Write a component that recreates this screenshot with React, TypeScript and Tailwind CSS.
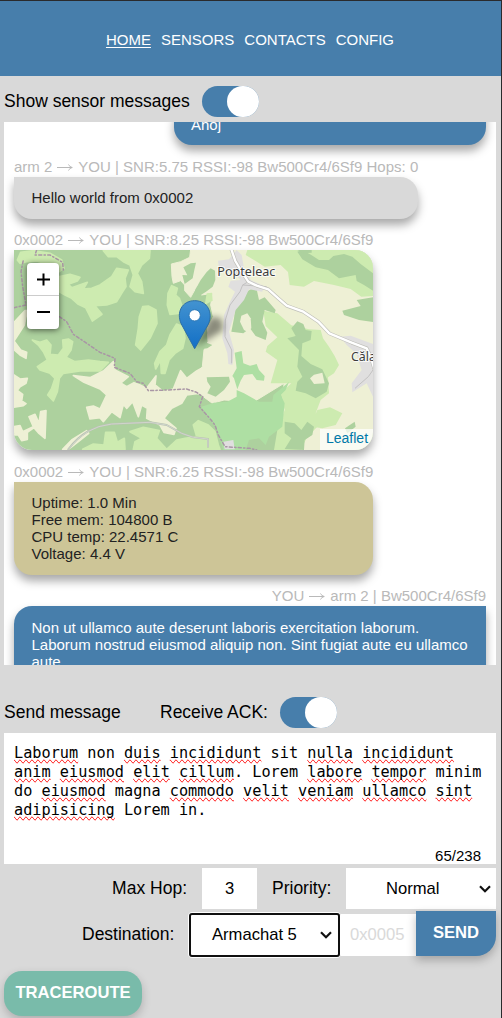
import type { ReactNode } from "react";

function Toggle() {
  return (
    <span className="flex h-[31px] w-[57px] shrink-0 justify-end rounded-full bg-[#477eab]">
      <span className="h-[31px] w-8 rounded-full bg-white" />
    </span>
  );
}

function Label({ children, right }: { children: ReactNode; right?: boolean }) {
  return (
    <div
      className={
        "flex h-[31px] items-end whitespace-nowrap pb-[2px] text-[15px] leading-[17px] text-[#b9b9b9] " +
        (right ? "justify-end" : "")
      }
    >
      {children}
    </div>
  );
}

function Arrow() {
  return (
    <svg className="mx-[5px] mb-[3px] h-[10px] w-[16px]" viewBox="0 0 16 10" fill="none" stroke="#b9b9b9">
      <path d="M0 5.5H15M11.5 2.5C12.2 4 13.5 5 15.3 5.5C13.5 6 12.2 7 11.5 8.5" />
    </svg>
  );
}

function Chevron() {
  return (
    <svg className="h-[8px] w-[12px] shrink-0" viewBox="0 0 12 8" fill="none" stroke="#111" strokeWidth="2.2">
      <path d="M1 1.2L6 6.2L11 1.2" />
    </svg>
  );
}

function TerrainMap() {
  return (
    <svg className="block h-[200px] w-[359px]" viewBox="0 0 1077 600">
      <defs>
        <linearGradient id="pin" x1="0" y1="0" x2="0" y2="1">
          <stop offset="0" stopColor="#4393d0" />
          <stop offset="1" stopColor="#126fc6" />
        </linearGradient>
        <filter id="soft" x="-50%" y="-50%" width="200%" height="200%">
          <feGaussianBlur stdDeviation="10" />
        </filter>
      </defs>
      <rect width="1077" height="600" fill="#add19e" />
      <g transform="translate(-42 -15)">
        <g fill="#cdebb0" stroke="#cdebb0" strokeWidth="5" strokeLinejoin="round">
          <path d="M52 45L62 22L100 17L150 25L185 45L192 70L170 85L150 60L110 48L80 50L60 55Z" />
          <path d="M178 95L210 88L240 97L232 108L205 118L215 128L262 112L250 132L275 130L300 120L335 95L350 70L385 75L375 100L378 125L365 145L350 170L320 180L285 182L306 208L277 228L257 188L235 178L215 160L195 150L178 140Z" />
          <path d="M310 17L450 17L448 40L425 60L412 85L425 110L430 145L405 140L390 125L400 90L390 60L370 50L350 35L325 35Z" />
          <path d="M428 185L445 183L468 195L471 235L450 280L422 315L407 300L415 250L418 215Z" />
          <path d="M515 122L532 130L527 150L538 160L545 180L535 205L510 208L502 180L504 145Z" />
          <path d="M530 237L550 245L555 280L548 310L525 325L507 345L495 385L484 385L482 345L467 372L464 355L480 320L500 300L510 270Z" />
          <path d="M97 285L120 292L140 285L153 300L150 328L175 330L190 310L188 285L205 282L218 290L213 315L198 337L225 350L265 345L300 350L325 352L300 378L240 378L190 385L178 400L172 440L160 468L143 450L155 430L165 400L150 385L120 375L112 365L142 345L130 320L115 300Z" />
          <path d="M317 562L343 562L352 592L373 580L375 613L248 613L280 597L312 600Z" />
          <path d="M390 560L430 547L478 557L470 580L500 613L400 613L405 590L425 580Z" />
          <path d="M500 613L530 585L555 580L590 575L580 540L595 527L625 540L645 560L655 600L660 613Z" />
        </g>
        <g fill="#eef0d5" stroke="#eef0d5" strokeWidth="5" strokeLinejoin="round">
          <path d="M38 237L75 197L84 197L78 215L73 240L42 288L62 315L80 322L78 340L60 330L38 310Z" />
          <path d="M38 387L60 402L82 400L78 415L60 425L52 436L68 448L65 468L78 476L70 482L38 487Z" />
          <path d="M38 545L60 542L68 560L100 545L87 515L105 508L117 535L122 500L138 497L135 580L117 565L102 548L82 562L82 583L65 587L55 570L38 570Z" />
          <path d="M220 392L270 398L310 378L340 350L345 375L385 395L362 414L380 425L402 413L420 420L440 430L468 393L465 420L490 440L520 432L542 377L560 400L590 378L605 370L660 425L640 450L595 445L560 450L545 475L515 490L492 520L528 550L522 568L492 562L480 540L440 520L442 490L425 480L415 515L398 470L380 490L370 478L360 518L335 500L310 530L300 518L270 522L260 487L280 483L300 492L320 450L300 432L252 412Z" />
          <path d="M188 613L215 585L260 557L266 565L235 590L205 613Z" />
        </g>
      </g>
      <path
        d="M530 -2H1080V602H810L800 540L810 400L720 455L630 450L595 460L568 440L545 415L520 405L545 377L565 350L570 300L582 275L580 235L598 200L590 165L595 130L562 135L590 105L600 72L590 58L555 100L545 115L530 142L512 122L512 105L500 92L478 100L474 80L472 42L500 35L527 22Z"
        fill="#eef0d5"
        stroke="#eef0d5"
        strokeWidth="3"
        strokeLinejoin="round"
      />
      <g fill="#cdebb0">
        <path d="M700 0H1077V138L1042 140L1010 117L960 105L900 93L870 110L827 105L822 66L800 45L752 50L695 15Z" />
        <path d="M748 182L790 190L832 226L885 238L920 240L927 265L945 290L962 318L975 345L960 370L942 382L945 430L920 450L905 490L925 515L880 560L860 600H780L790 540L812 480L800 430L832 400L770 400L790 330L755 305L760 288L790 262L755 228Z" />
        <path d="M900 502L910 480L948 472L985 490L965 525L925 535L895 530Z" />
        <path d="M578 130L594 128L596 152L572 165Z" />
      </g>
      <g fill="#add19e">
        <path d="M508 52L530 40L546 38L541 60L536 85L512 102L505 75L520 76Z" />
        <path d="M560 90L578 66L590 55L603 62L604 90L596 110L576 125L552 140L545 118Z" />
        <path d="M552 235L575 205L580 250L570 275L595 285L580 295L545 300Z" />
        <path d="M715 115L728 118L735 150L752 142L785 180L782 190L752 180L745 215L760 248L755 270L725 258L708 235L688 250L652 245L660 205L665 165L690 130Z" />
        <path d="M850 214L868 222L875 240L893 243L890 270L865 280L862 318L890 342L925 358L945 400L938 425L905 445L875 430L845 422L850 395L865 380L850 350L855 300L820 265L845 258L832 235Z" />
        <path d="M850 5L865 0L892 15L915 30L945 30L958 18L990 12L1015 20L1040 42L1077 70V122L1050 105L1028 93L1025 75L975 85L942 60L905 52L865 28Z" />
        <path d="M985 182L1040 168L1028 150L1077 142V216L1035 210L990 195Z" />
        <path d="M812 515L842 520L862 540L880 515L900 530L895 555L872 570L870 600L812 597L832 565L812 550Z" />
        <path d="M578 382L645 380L648 395L630 420L605 440L580 430L590 410L580 395Z" />
        <path d="M993 535L1022 515L1025 530L1000 550Z" />
        <path d="M850 0H893V8L870 10Z" />
      </g>
      <g fill="#eef0d5">
        <path d="M682 197L700 190L710 205L712 235L700 245L690 240L678 215Z" />
        <path d="M900 374L925 368L932 400L900 402L888 385Z" />
      </g>
      <path d="M562 470L600 458L640 455L668 440L668 420L690 430L735 455L775 455L778 435L825 396L815 420L800 435L812 460L805 530L765 560L755 585L735 565L705 570L695 600H628L605 530L580 500Z" fill="#aedfa3" />
      <path d="M662 308L683 303L688 340L708 347L728 342L735 360L752 378L750 392L728 390L715 372L690 375L680 392L670 418L660 385L655 378L668 355Z" fill="#aedfa3" />
      <g fill="#e0dfdf">
        <path d="M612 32L645 28L668 0L683 15L690 55L710 90L750 108L745 125L705 118L690 150L665 180L645 245L660 300L655 345L643 342L640 310L625 265L630 195L648 155L663 125L643 110L650 92L680 90L650 60L615 55Z" />
        <path d="M978 260L1010 257L1077 282V440L1058 400L1015 427L1013 400L1043 360L1026 310L998 285Z" />
        <path d="M628 575L658 570L662 598H632Z" />
      </g>
      <g transform="translate(-42 -15)">
        <g fill="none" stroke="#c2c1c1" strokeWidth="3">
          <path d="M745 110L728 120L720 140L690 180L676 225L675 275L695 315V355M1119 375L1105 395L1065 430" />
          <path d="M800 125L728 120" />
        </g>
        <g fill="none" strokeLinejoin="round" strokeLinecap="round">
          <path d="M205 613Q255 545 335 537L450 532L500 540L545 565L580 577L624 582V605" stroke="#b9c3b2" strokeWidth="6" />
          <path d="M205 613Q255 545 335 537L450 532L500 540L545 565L580 577L624 582V605" stroke="#d0d4cc" strokeWidth="3" />
          <path d="M694 13L706 48L722 75L745 110L770 122L805 133L835 160L860 182L910 200L955 230L988 265L1055 293L1100 310L1112 335L1124 375" stroke="#c0c0ba" strokeWidth="11" />
          <path d="M694 13L706 48L722 75L745 110L770 122L805 133L835 160L860 182L910 200L955 230L988 265L1055 293L1100 310L1112 335L1124 375" stroke="#fff" strokeWidth="7" />
        </g>
        <g fill="none" stroke="#a996a5" strokeWidth="4.5" strokeDasharray="9 7 4 7" strokeLinecap="round">
          <path d="M42 188L78 180L68 125L63 80L70 45M110 15L105 30L150 30L188 52L190 75" />
          <path d="M178 215L200 230L220 268L250 288L300 322L345 340L343 367L390 385L410 410L430 415L445 437L500 435L560 432L590 442L608 455L598 485L625 515L645 540L655 570L675 605L750 610L770 615" />
        </g>
      </g>
      <g fontFamily="'Noto Sans', 'Open Sans', sans-serif" fontSize="37" fill="#3c3c3c" stroke="#fff" strokeOpacity=".75" strokeWidth="6" paintOrder="stroke">
        <text x="610" y="79" textLength="174" lengthAdjust="spacingAndGlyphs">Popteleac</text>
        <text x="1011" y="333">Căla</text>
      </g>
      <path d="M543 292L590 200L622 205L628 240Z" fill="#000" opacity=".42" filter="url(#soft)" />
      <path d="M542 296L502 222C486 189 503 152 542 152C581 152 598 189 583 222Z" fill="url(#pin)" stroke="#2b6ea8" strokeWidth="3" />
      <circle cx="542" cy="196" r="17" fill="#fff" stroke="#2e7ab8" strokeWidth="3" />
    </svg>
  );
}

function Sp({ children }: { children: ReactNode }) {
  return <span className="[text-decoration-line:spelling-error]">{children}</span>;
}

const SHADOW = "shadow-[0_6px_10px_rgba(0,0,0,0.34)]";

export default function App() {
  return (
    <div className="flex h-[1018px] w-[502px] flex-col overflow-hidden border-r border-t border-[#2a2a2c] bg-[#d9d9d9] font-['Liberation_Sans',Arial,sans-serif] text-black">
      <nav className="flex h-[75px] shrink-0 items-center justify-center gap-[10px] bg-[#477eab] pr-px pt-px text-[15px] leading-[17px] text-white">
        <a className="underline underline-offset-2">HOME</a>
        <a>SENSORS</a>
        <a>CONTACTS</a>
        <a>CONFIG</a>
      </nav>

      <div className="flex h-[46px] shrink-0 items-center pl-1 pt-[5px] text-[17.5px]">
        <span className="w-[198px] pb-[1px]">Show sensor messages</span>
        <Toggle />
      </div>

      <section className="mx-1 h-[543px] w-[492px] shrink-0 overflow-hidden bg-white px-[10px] text-[15px] leading-[17px] text-[#222]">
        <div className={"-mt-[19px] ml-auto h-[42px] w-[312px] rounded-[18px] rounded-tr-none bg-[#477eab] px-[17px] pt-[13px] text-white " + SHADOW}>
          Ahoj
        </div>
        <div className="pt-[1px]">
          <Label>arm 2<Arrow />YOU | SNR:5.75 RSSI:-98 Bw500Cr4/6Sf9 Hops: 0</Label>
        </div>
        <div className={"h-[42px] w-[404px] rounded-[18px] rounded-tl-none bg-[#d9d9d9] px-[17.5px] pt-[12px] " + SHADOW}>
          Hello world from 0x0002
        </div>
        <Label>0x0002<Arrow />YOU | SNR:8.25 RSSI:-98 Bw500Cr4/6Sf9</Label>
        <div className={"relative h-[200px] w-[359px] overflow-hidden rounded-[18px] rounded-tl-none " + SHADOW}>
          <TerrainMap />
          <div className="absolute left-[13px] top-[13px] flex w-8 flex-col rounded-[4px] bg-white shadow-[0_1px_6px_rgba(0,0,0,0.6)]">
            <button className="flex h-[33px] items-center justify-center border-b border-[#ccc]">
              <svg className="h-[13px] w-[13px]" viewBox="0 0 13 13" stroke="#000" strokeWidth="2">
                <path d="M0 6.5H13M6.5 0.5V12.5" />
              </svg>
            </button>
            <button className="flex h-[33px] items-center justify-center">
              <svg className="h-[13px] w-[13px]" viewBox="0 0 13 13" stroke="#000" strokeWidth="2">
                <path d="M0 6H13" />
              </svg>
            </button>
          </div>
          <div className="absolute bottom-0 right-0 h-[21px] w-[53px] bg-white/70 pl-[6px] pt-[1px] text-[14px] leading-[17px] text-[#0078a8]">
            Leaflet
          </div>
        </div>
        <div className="pt-[1px]">
          <Label>0x0002<Arrow />YOU | SNR:6.25 RSSI:-98 Bw500Cr4/6Sf9</Label>
        </div>
        <div className={"h-[93px] w-[359px] rounded-[18px] rounded-tl-none bg-[#cdc597] px-[17.5px] pt-[12px] " + SHADOW}>
          <p>Uptime: 1.0 Min</p>
          <p>Free mem: 104800 B</p>
          <p>CPU temp: 22.4571 C</p>
          <p>Voltage: 4.4 V</p>
        </div>
        <Label right>YOU<Arrow />arm 2 | Bw500Cr4/6Sf9</Label>
        <div className={"h-[93px] w-[472px] rounded-[18px] rounded-tr-none bg-[#477eab] px-[17.5px] pt-[13px] text-white " + SHADOW}>
          Non ut ullamco aute deserunt laboris exercitation laborum. Laborum nostrud eiusmod aliquip non. Sint fugiat aute eu ullamco aute
        </div>
      </section>

      <div className="flex h-[68px] shrink-0 items-end pb-[5px] pl-1 text-[17.5px]">
        <span className="w-[156px] pb-[3px]">Send message</span>
        <span className="w-[119.5px] pb-[3px]">Receive ACK:</span>
        <Toggle />
      </div>

      <div className="mx-1 flex h-[131px] w-[492px] shrink-0 flex-col justify-between bg-white pl-[10px] pt-[11px]">
        <div className="whitespace-nowrap font-['DejaVu_Sans_Mono',monospace] text-[15.23px] leading-[19px]">
          <p><Sp>Laborum</Sp> non <Sp>duis</Sp> <Sp>incididunt</Sp> sit <Sp>nulla</Sp> <Sp>incididunt</Sp></p>
          <p><Sp>anim</Sp> <Sp>eiusmod</Sp> <Sp>elit</Sp> <Sp>cillum</Sp>. Lorem <Sp>labore</Sp> <Sp>tempor</Sp> minim</p>
          <p>do <Sp>eiusmod</Sp> magna <Sp>commodo</Sp> <Sp>velit</Sp> <Sp>veniam</Sp> <Sp>ullamco</Sp> <Sp>sint</Sp></p>
          <p><Sp>adipisicing</Sp> Lorem in.</p>
        </div>
        <span className="pr-[15px] text-right text-[15px] leading-[17px]">65/238</span>
      </div>

      <div className="mr-[5px] mt-1 flex h-[41px] shrink-0 items-center justify-end text-[17.5px]">
        <span>Max Hop:</span>
        <span className="ml-[15px] flex h-[41px] w-[55px] items-center justify-center bg-white pt-px text-[16.6px]">3</span>
        <span className="ml-[15px] w-[74px]">Priority:</span>
        <span className="flex h-[41px] w-[150px] items-center bg-white pl-10 pr-[5px] pt-px text-[16.6px]">
          <span className="grow">Normal</span>
          <Chevron />
        </span>
      </div>

      <div className="mr-[5px] mt-[2px] flex h-[46px] shrink-0 justify-end text-[17.5px]">
        <span className="w-[106px] pt-[10px]">Destination:</span>
        <span className="mt-[1px] flex h-[46px] w-[153px] shrink-0 items-center rounded-[4px] border border-white bg-white">
          <span className="flex h-[44px] w-[151px] items-center rounded-[3px] border-2 border-[#101010] pl-[21px] pr-[6px] text-[16.6px]">
            <span className="grow">Armachat 5</span>
            <Chevron />
          </span>
        </span>
        <span className="mt-[3px] flex h-[42px] w-[75px] items-center bg-white pl-[9px] text-[16.6px] text-[#d9d9d9]">0x0005</span>
        <button className="flex h-[45px] w-[80px] items-center justify-center rounded-br-[20px] bg-[#477eab] text-[16.6px] font-bold text-white shadow-[0_4px_10px_rgba(0,0,0,0.25)]">
          SEND
        </button>
      </div>

      <button className="ml-1 mt-[14px] flex h-[45px] w-[138px] shrink-0 items-center justify-center rounded-[18px] bg-[#79bbaa] text-[16.6px] font-bold text-white shadow-[0_4px_10px_rgba(0,0,0,0.2)]">
        TRACEROUTE
      </button>
    </div>
  );
}
